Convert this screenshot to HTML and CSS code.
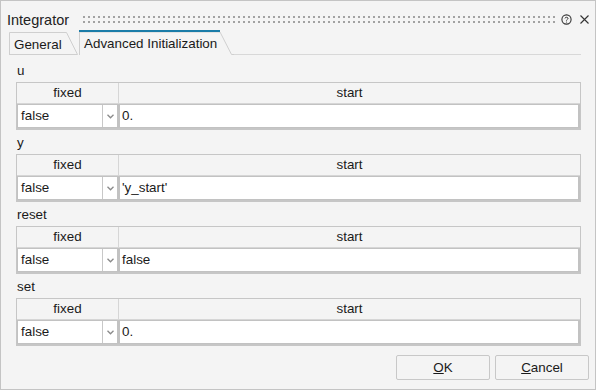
FILE: index.html
```html
<!DOCTYPE html>
<html>
<head>
<meta charset="utf-8">
<link rel="stylesheet" href="styles.css">
</head>
<body>
<div class="window">
  <div class="titlebar">
    <span class="title">Integrator</span>
    <span class="grip"></span>
    <svg class="help" width="11" height="11" viewBox="0 0 11 11"><circle cx="5.5" cy="5.5" r="4.6" fill="none" stroke="#333" stroke-width="1.1"/><path d="M4 4.4 C4 2.9 7 2.9 7 4.4 C7 5.4 5.5 5.4 5.5 6.6" fill="none" stroke="#333" stroke-width="1"/><circle cx="5.5" cy="8" r="0.6" fill="#333"/></svg>
    <svg class="close" width="9" height="9" viewBox="0 0 9 9"><path d="M0.5 0.5 L8.5 8.5 M8.5 0.5 L0.5 8.5" stroke="#333" stroke-width="1.1"/></svg>
  </div>
  <div class="tabs">
    <div class="tab">
      <svg class="tabshape" width="70" height="23" viewBox="0 0 70 23"><path d="M0.5 23 V0.5 H57.5 L68.5 22.5 H0" fill="none" stroke="#cfcfcf"/></svg>
      <span>General</span>
    </div>
    <div class="tab active">
      <svg class="tabshape" width="155" height="25" viewBox="0 0 155 25"><path d="M0.5 25 V2 H141 L152.5 24.5 H155" fill="none" stroke="#cfcfcf"/><path d="M0 1 H141" stroke="#1a7ca8" stroke-width="2"/></svg>
      <span>Advanced Initialization</span>
    </div>
    <div class="tabfill"></div>
  </div>
  <div class="content">
    <div class="section">
      <div class="label">u</div>
      <div class="grid">
        <div class="hdr"><div class="hc">fixed</div><div class="hc">start</div></div>
        <div class="row"><div class="combo"><span class="cv">false</span><span class="arrow"><svg width="7" height="5" viewBox="0 0 7 5"><path d="M0.5 0.8 L3.5 3.8 L6.5 0.8" fill="none" stroke="#8a8a8a" stroke-width="1.3"/></svg></span></div><div class="inp">0.</div></div>
      </div>
    </div>
    <div class="section">
      <div class="label">y</div>
      <div class="grid">
        <div class="hdr"><div class="hc">fixed</div><div class="hc">start</div></div>
        <div class="row"><div class="combo"><span class="cv">false</span><span class="arrow"><svg width="7" height="5" viewBox="0 0 7 5"><path d="M0.5 0.8 L3.5 3.8 L6.5 0.8" fill="none" stroke="#8a8a8a" stroke-width="1.3"/></svg></span></div><div class="inp">'y_start'</div></div>
      </div>
    </div>
    <div class="section">
      <div class="label">reset</div>
      <div class="grid">
        <div class="hdr"><div class="hc">fixed</div><div class="hc">start</div></div>
        <div class="row"><div class="combo"><span class="cv">false</span><span class="arrow"><svg width="7" height="5" viewBox="0 0 7 5"><path d="M0.5 0.8 L3.5 3.8 L6.5 0.8" fill="none" stroke="#8a8a8a" stroke-width="1.3"/></svg></span></div><div class="inp">false</div></div>
      </div>
    </div>
    <div class="section">
      <div class="label">set</div>
      <div class="grid">
        <div class="hdr"><div class="hc">fixed</div><div class="hc">start</div></div>
        <div class="row"><div class="combo"><span class="cv">false</span><span class="arrow"><svg width="7" height="5" viewBox="0 0 7 5"><path d="M0.5 0.8 L3.5 3.8 L6.5 0.8" fill="none" stroke="#8a8a8a" stroke-width="1.3"/></svg></span></div><div class="inp">0.</div></div>
      </div>
    </div>
  </div>
  <div class="footer">
    <button class="btn"><u>O</u>K</button>
    <button class="btn"><u>C</u>ancel</button>
  </div>
</div>
</body>
</html>
```

FILE: styles.css
```css
html, body {
  margin: 0;
  padding: 0;
  background: #ffffff;
}
body {
  font-family: "Liberation Sans", Arial, sans-serif;
  font-size: 13.4px;
  color: #1a1a1a;
}
.window {
  box-sizing: border-box;
  width: 596px;
  height: 390px;
  border: 1px solid #c4c4c4;
  background: #f4f4f4;
  display: flex;
  flex-direction: column;
}
.titlebar {
  height: 29px;
  display: flex;
  align-items: center;
  padding: 0 0 0 6px;
}
.title {
  font-size: 14.5px;
  color: #222;
  padding-top: 9px;
}
.grip {
  margin-left: 14px;
  width: 472px;
  height: 8px;
  margin-top: 8px;
  background-image:
    linear-gradient(to right, #a2a2a2 2px, transparent 2px),
    linear-gradient(to right, #a2a2a2 2px, transparent 2px);
  background-size: 5px 2px, 5px 2px;
  background-position: 0 0, 0 5px;
  background-repeat: repeat-x, repeat-x;
}
.help {
  margin-left: 6px;
  margin-top: 8px;
}
.close {
  margin-left: 8px;
  margin-top: 8px;
}
.tabs {
  display: flex;
  align-items: flex-end;
  height: 25px;
  padding-left: 8px;
  padding-right: 14px;
}
.tab {
  position: relative;
  height: 23px;
  width: 70px;
  box-sizing: border-box;
  padding-left: 5px;
  line-height: 25px;
  color: #1a1a1a;
}
.tab.active {
  height: 25px;
  width: 155px;
  line-height: 27px;
}
.tabshape {
  position: absolute;
  left: 0;
  top: 0;
}
.tab span {
  position: relative;
}
.tabfill {
  flex: 1;
  height: 1px;
  background: #d8d8d8;
}
.content {
  padding: 5px 14px 0 15px;
  display: flex;
  flex-direction: column;
  gap: 2px;
}
.section {
  display: flex;
  flex-direction: column;
  gap: 2px;
}
.label {
  height: 20px;
  line-height: 22px;
  padding-left: 1px;
}
.grid {
  border: 1px solid #c6c6c6;
  height: 48px;
  box-sizing: border-box;
  border-bottom-width: 2px;
}
.hdr {
  display: grid;
  grid-template-columns: 102px 1fr;
  height: 21px;
  border-bottom: 1px solid #d6d6d6;
  box-sizing: border-box;
}
.hc {
  text-align: center;
  line-height: 20px;
}
.hc:first-child {
  border-right: 1px solid #d6d6d6;
}
.row {
  display: grid;
  grid-template-columns: 102px 1fr;
  height: 24px;
}
.combo {
  display: flex;
  background: #fff;
  border: 1px solid #c2c2c2;
  border-right-width: 2px;
  box-sizing: border-box;
}
.cv {
  flex: 1;
  padding-left: 3px;
  line-height: 22px;
}
.arrow {
  width: 14px;
  border-left: 1px solid #c8c8c8;
  display: flex;
  align-items: center;
  justify-content: center;
}
.inp {
  background: #fff;
  border: 1px solid #c2c2c2;
  border-right-width: 2px;
  box-sizing: border-box;
  padding-left: 2px;
  line-height: 22px;
}
.footer {
  margin-top: auto;
  display: flex;
  justify-content: flex-end;
  gap: 5px;
  padding: 0 6px 9px 0;
}
.btn {
  width: 94px;
  height: 25px;
  box-sizing: border-box;
  border: 1px solid #c8c8c8;
  border-radius: 2px;
  background: #f4f4f4;
  font-family: "Liberation Sans", Arial, sans-serif;
  font-size: 13.4px;
  color: #1a1a1a;
  padding: 0;
}
```
